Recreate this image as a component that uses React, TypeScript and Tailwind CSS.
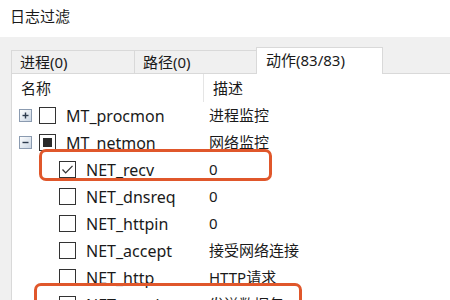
import React from 'react';

type Row = {
  name: string;
  desc: string;
  level: 0 | 1;
  expand?: 'plus' | 'minus';
  check: 'none' | 'checked' | 'partial';
  mark?: 'a' | 'b';
};

const rows: Row[] = [
  { name: 'MT_procmon', desc: '进程监控', level: 0, expand: 'plus', check: 'none' },
  { name: 'MT_netmon', desc: '网络监控', level: 0, expand: 'minus', check: 'partial' },
  { name: 'NET_recv', desc: '0', level: 1, check: 'checked', mark: 'a' },
  { name: 'NET_dnsreq', desc: '0', level: 1, check: 'none' },
  { name: 'NET_httpin', desc: '0', level: 1, check: 'none' },
  { name: 'NET_accept', desc: '接受网络连接', level: 1, check: 'none' },
  { name: 'NET_http', desc: 'HTTP请求', level: 1, check: 'none' },
  { name: 'NET_send', desc: '发送数据包', level: 1, check: 'checked', mark: 'b' },
];

const tabs = [
  { label: '进程(0)', w: 'w-[123px]' },
  { label: '路径(0)', w: 'w-[122px]' },
];

const ExpandBox = ({ kind }: { kind: 'plus' | 'minus' }) => (
  <svg width="13" height="13" viewBox="0 0 13 13" className="shrink-0">
    <defs>
      <linearGradient id={`g-${kind}`} x1="0" y1="0" x2="1" y2="1">
        <stop offset="0" stopColor="#ffffff" />
        <stop offset="1" stopColor="#c9d5e3" />
      </linearGradient>
    </defs>
    <rect x="0.5" y="0.5" width="12" height="12" fill={`url(#g-${kind})`} stroke="#8b9bb0" />
    <path d="M3.5 6.5h6" stroke="#2d3b4d" strokeWidth="1.4" />
    {kind === 'plus' && <path d="M6.5 3.5v6" stroke="#2d3b4d" strokeWidth="1.4" />}
  </svg>
);

const CheckBox = ({ state }: { state: Row['check'] }) => (
  <svg width="17" height="17" viewBox="0 0 17 17" className="shrink-0">
    <rect x="0.5" y="0.5" width="16" height="16" fill="#fff" stroke="#333" />
    {state === 'partial' && <rect x="4" y="4" width="9" height="9" fill="#2a2a2a" />}
    {state === 'checked' && (
      <path d="M3.5 8.5l3.2 3.4 6.8-7" fill="none" stroke="#333" strokeWidth="1.3" />
    )}
  </svg>
);

const App: React.FC = () => {
  return (
    <div
      className="w-[450px] h-[300px] overflow-hidden bg-white text-[#1a1a1a] text-[16px] leading-none"
      style={{ fontFamily: '"Noto Sans", "Noto Sans CJK SC", sans-serif' }}
    >
      <div className="h-[37px] pl-[10px] pt-[9px] text-[15px]">日志过滤</div>

      <div className="bg-[#f0f0f0] pl-[11px] h-[263px] flex flex-col overflow-hidden">
        <div className="shrink-0 flex items-end h-[37px]">
          {tabs.map((t) => (
            <div
              key={t.label}
              className={`${t.w} h-[24px] border-t border-l border-b border-[#d9d9d9] pl-[8px] pt-[4px] text-[15px]`}
            >
              {t.label}
            </div>
          ))}
          <div className="w-[127px] h-[27px] bg-white border-t border-l border-r border-[#d9d9d9] pl-[9px] pt-[5px] text-[15px]">
            动作(83/83)
          </div>
          <div className="flex-1 h-[24px] border-b border-[#d9d9d9]" />
        </div>

        <div className="shrink-0 bg-white border-l border-[#d9d9d9]">
          <div className="flex h-[28px] items-center text-[15px]">
            <div className="w-[191px] pl-[9px]">名称</div>
            <div className="w-px h-full bg-[#e5e5e5]" />
            <div className="pl-[9px]">描述</div>
          </div>

          {rows.map((r) => (
            <div key={r.name} className="relative flex items-center h-[27px]">
              {r.mark === 'a' && (
                <div className="absolute left-[27px] top-[-7px] w-[233px] h-[32px] rounded-[7px] border-[3px] border-[#e0572b]" />
              )}
              {r.mark === 'b' && (
                <div className="absolute left-[22px] top-[-8px] w-[268px] h-[40px] rounded-[7px] border-[3px] border-[#e0572b]" />
              )}
              <div className={`flex items-center w-[197px] ${r.level === 0 ? 'pl-[7px]' : 'pl-[47px]'}`}>
                {r.expand && <ExpandBox kind={r.expand} />}
                <div className={r.expand ? 'ml-[7px]' : ''}>
                  <CheckBox state={r.check} />
                </div>
                <span className="ml-[10px]">{r.name}</span>
              </div>
              <div className="text-[15px]">{r.desc}</div>
            </div>
          ))}
        </div>
      </div>
    </div>
  );
};

export default App;
